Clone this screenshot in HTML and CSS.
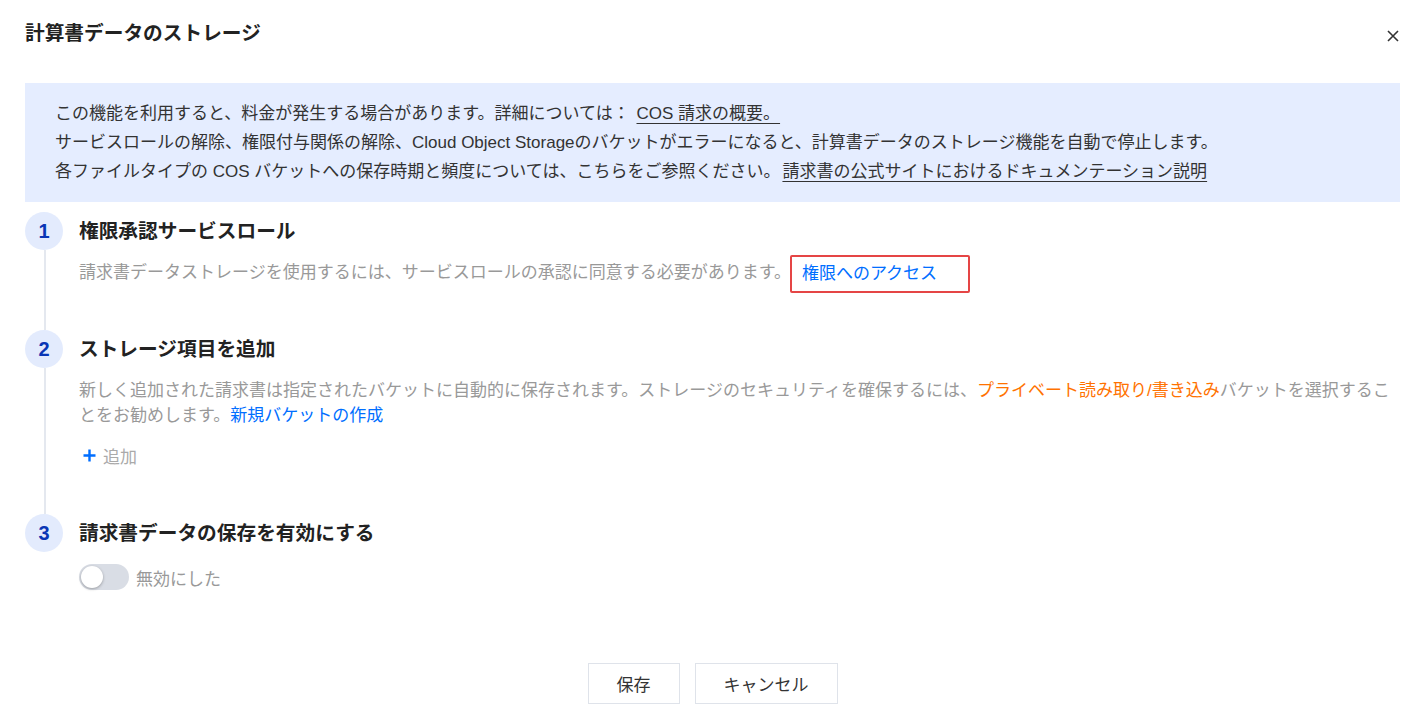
FILE: index.html
```html
<!DOCTYPE html>
<html lang="ja">
    <head>
        <meta charset="utf-8">
        <title>計算書データのストレージ</title>
        <link rel="stylesheet" href="styles.css">
    </head>
    <body>
        <div class="dialog">
            <div class="dialog-header">
                <h2 class="dialog-title">計算書データのストレージ</h2>
                <button class="close-btn" title="閉じる">
                    <svg width="12" height="12" viewBox="0 0 12 12">
                        <path d="M1 1 L11 11 M11 1 L1 11" stroke="#333" stroke-width="1.6" fill="none"/>
                    </svg>
                </button>
            </div>

            <div class="notice">
                <p>この機能を利用すると、料金が発生する場合があります。詳細については：&nbsp;<a href="#" class="doc-link">COS 請求の概要。</a></p>
                <p>サービスロールの解除、権限付与関係の解除、Cloud Object Storageのバケットがエラーになると、計算書データのストレージ機能を自動で停止します。</p>
                <p>各ファイルタイプの COS バケットへの保存時期と頻度については、こちらをご参照ください。<a href="#" class="doc-link">請求書の公式サイトにおけるドキュメンテーション説明</a></p>
            </div>

            <div class="steps">
                <div class="step">
                    <div class="step-rail">
                        <span class="step-num">1</span>
                        <span class="step-line"></span>
                    </div>
                    <div class="step-body">
                        <h3 class="step-title">権限承認サービスロール</h3>
                        <p class="step-desc">請求書データストレージを使用するには、サービスロールの承認に同意する必要があります。<a href="#" class="link link-boxed">権限へのアクセス</a></p>
                    </div>
                </div>

                <div class="step">
                    <div class="step-rail">
                        <span class="step-num">2</span>
                        <span class="step-line"></span>
                    </div>
                    <div class="step-body step-body-2">
                        <h3 class="step-title">ストレージ項目を追加</h3>
                        <p class="step-desc">新しく追加された請求書は指定されたバケットに自動的に保存されます。ストレージのセキュリティを確保するには、<span class="warn">プライベート読み取り/書き込み</span>バケットを選択することをお勧めします。<a href="#" class="link">新規バケットの作成</a></p>
                        <div class="add-row">
                            <svg width="13" height="13" viewBox="0 0 13 13">
                                <path d="M6.5 0.5 V12.5 M0.5 6.5 H12.5" stroke="#006eff" stroke-width="2.4" fill="none"/>
                            </svg>
                            <span>追加</span>
                        </div>
                    </div>
                </div>

                <div class="step">
                    <div class="step-rail">
                        <span class="step-num">3</span>
                    </div>
                    <div class="step-body">
                        <h3 class="step-title">請求書データの保存を有効にする</h3>
                        <div class="switch-row">
                            <span class="switch"><span class="switch-knob"></span></span>
                            <span class="switch-text">無効にした</span>
                        </div>
                    </div>
                </div>
            </div>

            <div class="dialog-footer">
                <button class="btn">保存</button>
                <button class="btn">キャンセル</button>
            </div>
        </div>
    </body>
</html>
```

FILE: styles.css
```css
body{margin: 0; background: #fff; font-family: "Liberation Sans", "Noto Sans CJK JP", sans-serif; color: #333;}
p{margin: 0;}
a{text-decoration: none;}

.dialog{padding: 19px 15px 0 25px;}
.dialog-header{display: flex; justify-content: space-between; align-items: center; height: 28px;}
.dialog-title{margin: 0; font-size: 19.7px; line-height: 28px; font-weight: bold; color: #222;}
.close-btn{border: 0; background: none; padding: 0; width: 14px; height: 14px; display: flex; align-items: center; justify-content: center; margin-top: 6px; cursor: pointer;}

.notice{margin-top: 36px; background: #e5edff; padding: 16px 30px; font-size: 17px; line-height: 29px; color: #333;}
.doc-link{color: #333; text-decoration: underline; text-underline-offset: 4px; text-decoration-thickness: 1px; margin-left: 2px;}

.steps{margin-top: 10px;}
.step{display: grid; grid-template-columns: 38px 1fr; column-gap: 16px;}
.step-rail{display: flex; flex-direction: column; align-items: center;}
.step-num{width: 38px; height: 38px; border-radius: 50%; background: #e3ebfd; color: #0a36b5; font-weight: bold; font-size: 20px; display: flex; align-items: center; justify-content: center; flex: none;}
.step-line{flex: 1; width: 2px; margin-left: 2px; background: #e4e8ef;}
.step-body{padding-bottom: 45px;}
.step-body-2{padding-bottom: 49px;}
.step:last-child .step-body{padding-bottom: 0;}
.step-title{margin: 0; font-size: 19.7px; line-height: 38px; font-weight: bold; color: #222;}
.step-desc{margin-top: 10px; font-size: 17px; line-height: 25px; color: #999;}

.link{color: #006eff;}
.link-boxed{display: inline-block; border: 2px solid #e54545; border-radius: 2px; line-height: 34px; width: 138px; padding: 0 28px 0 10px; margin: -5px 0 -8px -1px; vertical-align: top;}
.warn{color: #ff7200;}

.add-row{margin-top: 17px; display: flex; align-items: center; gap: 7px; padding-left: 4px; height: 20px; font-size: 17px; color: #aaa;}

.switch-row{margin-top: 12px; display: flex; align-items: center; gap: 7px;}
.switch{width: 50px; height: 26px; border-radius: 13px; background: #d9dde5; position: relative; display: inline-block;}
.switch-knob{position: absolute; left: 2px; top: 2px; width: 22px; height: 22px; border-radius: 50%; background: #fff; box-shadow: 0 1px 3px rgba(0,0,0,0.3);}
.switch-text{font-size: 17px; color: #999;}

.dialog-footer{margin-top: 73px; display: flex; justify-content: center; gap: 15px;}
.btn{height: 41px; padding: 0 28px; border: 1px solid #dfe3ea; background: #fff; color: #333; font-family: inherit; font-size: 17px; cursor: pointer;}
```
